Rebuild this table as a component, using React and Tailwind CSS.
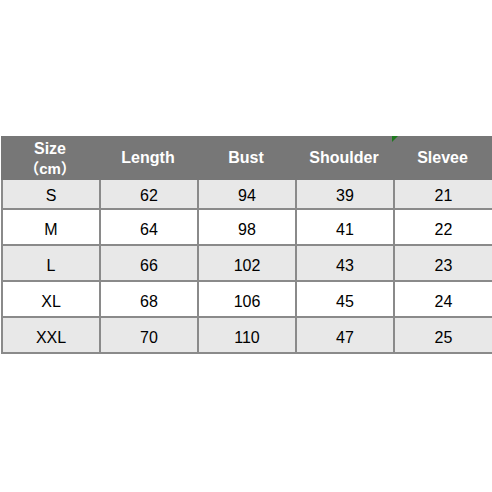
import React from 'react'

const rows = [
  ['S', '62', '94', '39', '21'],
  ['M', '64', '98', '41', '22'],
  ['L', '66', '102', '43', '23'],
  ['XL', '68', '106', '45', '24'],
  ['XXL', '70', '110', '47', '25'],
]

export default function App() {
  return (
    <div className="w-[492px] h-[492px] bg-white pt-[136px] pl-[1px] font-['Liberation_Sans',Arial,sans-serif] text-[16px]">
      <div className="w-[491px]">
        <div className="relative grid grid-cols-[98px_98px_98px_98px_1fr] h-[44px] bg-[#777777] text-white font-bold">
          <div className="flex flex-col items-center justify-center pt-[2px] leading-[20px]">
            <span>Size</span>
            <span className="font-['Liberation_Sans','Noto_Sans_CJK_SC',sans-serif] text-[15px] leading-[20px] [text-spacing-trim:space-all]">（cm）</span>
          </div>
          <div className="flex items-center justify-center">Length</div>
          <div className="flex items-center justify-center">Bust</div>
          <div className="flex items-center justify-center">Shoulder</div>
          <div className="flex items-center justify-center">Slevee</div>
          <div className="absolute left-[391px] top-0 w-0 h-0 border-t-[6px] border-t-[#1e7a1e] border-r-[6px] border-r-transparent" />
        </div>
        {rows.map((r, i) => (
          <div
            key={r[0]}
            className={`grid grid-cols-[98px_98px_98px_98px_1fr] border-b-2 border-[#8a8a8a] ${i === 0 ? 'h-[30px]' : 'h-[36px]'} ${i % 2 === 0 ? 'bg-[#e8e8e8]' : 'bg-white'}`}
          >
            {r.map((c, j) => (
              <div key={j} className={`flex items-center justify-center border-l-2 border-[#8a8a8a] text-black ${i === 0 ? 'pt-[3px]' : 'pt-[5px]'}`}>
                {c}
              </div>
            ))}
          </div>
        ))}
      </div>
    </div>
  )
}
